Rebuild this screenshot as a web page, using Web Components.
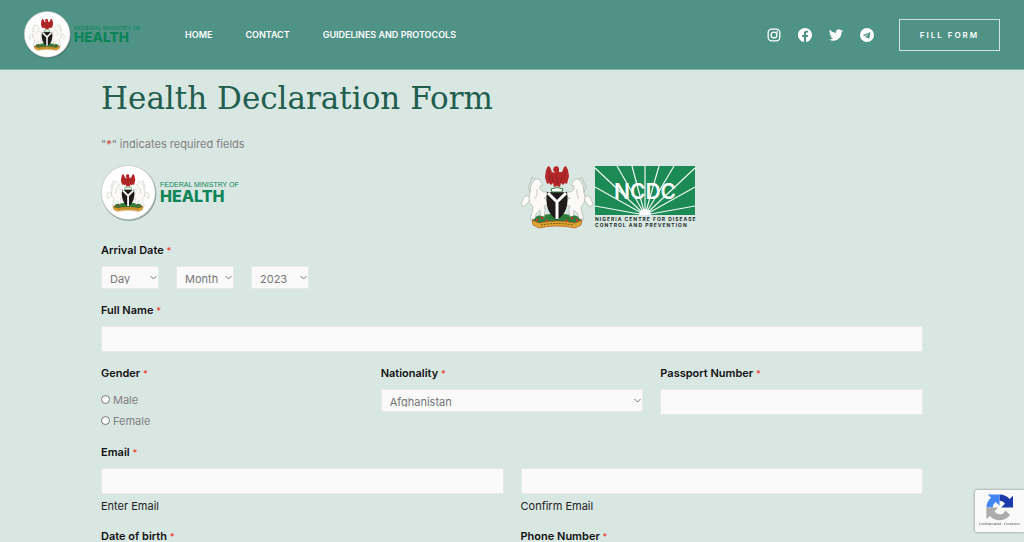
<!DOCTYPE html>
<html lang="en">
<head>
<meta charset="utf-8">
<meta name="viewport" content="width=device-width, initial-scale=1">
<title>Health Declaration Form</title>
<style>
  body {
    margin: 0;
    background: #d9e7e3;
    color: #808080;
    font-family: Inter, "Liberation Sans", sans-serif;
    font-size: 11px;
    line-height: 16px;
  }
</style>
</head>
<body>
<site-header>
  <a href="#home">Home</a>
  <a href="#contact">Contact</a>
  <a href="#guidelines">Guidelines and Protocols</a>
</site-header>

<declaration-form>
  <form-row columns="2">
    <ministry-logo></ministry-logo>
    <ncdc-logo></ncdc-logo>
  </form-row>
  <date-field label="Arrival Date"></date-field>
  <text-field label="Full Name"></text-field>
  <form-row columns="3">
    <radio-field label="Gender" options="Male,Female"></radio-field>
    <select-field label="Nationality" options="Afghanistan,Albania,Algeria,Nigeria"></select-field>
    <text-field label="Passport Number"></text-field>
  </form-row>
  <email-field label="Email"></email-field>
  <form-row columns="2">
    <text-field label="Date of birth"></text-field>
    <text-field label="Phone Number"></text-field>
  </form-row>
</declaration-form>

<recaptcha-badge></recaptcha-badge>

<script>
// One supporter horse, facing right. Mirrored for the other side.
const horse = `
  <path d="M9 33 Q4 28 2 34 L0 39 2 42 6 39 8 36Z"/>
  <path d="M22 20 L18 14 14 14 10 20 9 28 8 33 9 38 12 42 11 48 9 54 14 54 15 49 19 45 20 52 23 54 24 45 23 41 27 40 27 36 23 33 27 31 27 27 22 27 19 24 19 21Z"/>
  <path d="M14 14 L11 12 9 18 7 22 9 27 M16 24 Q17 30 14 34" fill="none"/>`

// Coat of arms, drawn on a 72x64 canvas. Shared by both logos.
const crest = `
  <path d="M11 57 Q13 50 22 50 L36 48 50 50 Q59 50 61 57 L50 60 H22Z" fill="#2f7d3b"/>
  <g fill="#fbfaf7" stroke="#aaaaa4" stroke-width=".6" stroke-linejoin="round">
    <g>${horse}</g>
    <g transform="translate(72 0) scale(-1 1)">${horse}</g>
  </g>
  <path d="M11 57 Q14 51 21 51 L28 53 36 50 44 53 51 51 Q58 51 61 57 L50 60 H22Z" fill="#2f7d3b"/>
  <g fill="#d8322c">
    <circle cx="16" cy="55" r="1.200"/><circle cx="21" cy="53" r="1.200"/><circle cx="26" cy="56" r="1.200"/>
    <circle cx="46" cy="56" r="1.200"/><circle cx="51" cy="53" r="1.200"/><circle cx="56" cy="55" r="1.200"/>
  </g>
  <path d="M11 55 L18 58 Q36 54 54 58 L61 55 60 60 54 63 Q36 59 18 63 L12 60Z" fill="#dba62f" stroke="#b5461f" stroke-width=".6"/>
  <path d="M20 60 Q36 57 52 60" fill="none" stroke="#7a5a1b" stroke-width="1" stroke-dasharray="2 1"/>
  <path d="M26 27 Q31 28 36 26 Q41 28 46 27 Q49 47 36 55 Q23 47 26 27Z" fill="#1f1b1a"/>
  <path d="M27 28 L36 37 45 28 M36 36 V54" fill="none" stroke="#fff" stroke-width="3"/>
  <path d="M30 24 Q36 21 42 24 L41 27 H31Z" fill="#fff" stroke="#2f7d3b" stroke-width="1"/>
  <path d="M34 8 L32 5 33 2 36 1 38 3 38 7 41 7 43 2 45 1 47 5 48 11 46 19 44 18 42 20 40 18 39 22 36 21 33 22 32 18 30 20 28 18 26 19 24 12 25 5 27 1 29 2 31 7Z" fill="#b5282a"/>
  <path d="M28 6 L29 15 M31 10 L32 17 M44 6 L43 15 M41 10 L40 17 M36 9 V19" fill="none" stroke="#7c1b1d" stroke-width=".6"/>`

// Builds the shadow root from a style block and markup
class BaseElement extends HTMLElement {
  constructor () {
    super()
    this.attachShadow({ mode: 'open' })
  }

  render (css, html) {
    this.shadowRoot.innerHTML = `<style>*{box-sizing:border-box}${css}</style>${html}`
  }
}

const labelCss = `
  .label { display: block; color: #111; font-weight: 600; line-height: 16px; padding: 0; margin: 0 0 8px; }
  .label span { color: #f04438; font-size: 9px; font-weight: 600; line-height: 9px; }`

const inputCss = `
  input[type="text"], input[type="email"] {
    display: block; width: 100%; height: 26px; margin: 0; padding: 0 8px;
    background: #fafafa; border: 1px solid #e6e9e8; border-radius: 0;
    color: #666; font: inherit;
  }`

const selectCss = `
  .select { position: relative; display: block; }
  select {
    appearance: none; display: block; width: 100%; height: 23px; margin: 0;
    padding: 4px 12px 4px 8px; background: #fafafa; border: 1px solid #e6e9e8;
    border-radius: 0; color: #757575; font: inherit; line-height: 16px;
  }
  .select svg { position: absolute; top: 8px; right: 2px; width: 7px; height: 7px; pointer-events: none; }`

const chevron = '<svg viewBox="0 0 7 7" aria-hidden="true"><path d="M.5 2 L3.5 5 6.5 2" fill="none" stroke="#777" stroke-width="1"/></svg>'

class MinistryLogo extends BaseElement {
  connectedCallback () {
    this.render(`
      :host { display: block; }
      svg { display: block; width: var(--logo-width, 139px); height: auto; overflow: visible; }
      .small { font: 7px "Liberation Sans", sans-serif; }
      .large { font: 800 16px Inter, sans-serif; }
    `, `
      <svg viewBox="0 0 139 56" role="img" aria-label="Federal Ministry of Health">
        <circle cx="28" cy="28.5" r="27.5" fill="#3b5550" opacity=".45"/>
        <circle cx="27.3" cy="27.5" r="27" fill="#fff" stroke="#b5bcba" stroke-width=".6"/>
        <g transform="translate(5.5 8.5) scale(.6)">${crest}</g>
        <g fill="#0c8457">
          <text class="small" x="59" y="22">FEDERAL MINISTRY OF</text>
          <text class="large" x="59" y="37">HEALTH</text>
        </g>
      </svg>`)
  }
}
customElements.define('ministry-logo', MinistryLogo)

class NcdcLogo extends BaseElement {
  connectedCallback () {
    const ends = [[0, 40], [0, 21], [0, 2], [22, 0], [37, 0], [50, 0], [64, 0], [79, 0], [100, 2], [100, 21], [100, 40]]
    const rays = ends.map(([x, y]) => `M50 49L${x} ${y}`).join('')
    this.render(`
      :host { display: block; }
      svg { display: block; width: 175px; height: 64px; overflow: visible; }
      .name { font: 600 21px Inter, sans-serif; }
      .line { font: 700 5px Inter, sans-serif; letter-spacing: 1px; }
    `, `
      <svg viewBox="0 0 175 64" role="img" aria-label="Nigeria Centre for Disease Control and Prevention">
        ${crest}
        <g transform="translate(74 1)">
          <path d="M0 0H100V49H0Z" fill="#1b8a55"/>
          <path d="${rays}" stroke="#eef8f2" stroke-width="1.2"/>
          <path d="M44 49a6 6 0 0 1 12 0Z" fill="#fff"/>
          <text class="name" x="50" y="33" text-anchor="middle" fill="#fff">NCDC</text>
          <text class="line" x="0" y="55" fill="#1e2b27">NIGERIA CENTRE FOR DISEASE</text>
          <text class="line" x="0" y="61" fill="#1e2b27">CONTROL AND PREVENTION</text>
        </g>
      </svg>`)
  }
}
customElements.define('ncdc-logo', NcdcLogo)

class SiteHeader extends BaseElement {
  connectedCallback () {
    this.render(`
      :host {
        display: flex; align-items: center; height: 70px; box-sizing: border-box;
        padding: 0 24px; background: #4f9286; border-bottom: 1px solid #80b3a9;
        --logo-width: 118px;
      }
      nav { display: flex; gap: 33px; margin-left: 43px; }
      ::slotted(a) { color: #fff; font-size: 9px; font-weight: 600; text-transform: uppercase; text-decoration: none; }
      .social { display: flex; gap: 17px; margin-left: auto; }
      .social a { display: block; width: 14px; height: 14px; }
      .social svg { display: block; width: 14px; height: 14px; fill: #fff; }
      button {
        width: 101px; height: 32px; margin-left: 25px; padding: 0; background: none;
        border: 1px solid #cfe2de; color: #fff; font: 600 8px Inter, sans-serif;
        letter-spacing: 2px; text-transform: uppercase;
      }
    `, `
      <ministry-logo></ministry-logo>
      <nav><slot></slot></nav>
      <div class="social">
        <a href="#instagram" aria-label="Instagram"><svg viewBox="0 0 24 24"><g fill="none" stroke="#fff" stroke-width="2.2"><rect x="2" y="2" width="20" height="20" rx="6"/><circle cx="12" cy="12" r="5"/></g><circle cx="17.5" cy="6.5" r="1.5"/></svg></a>
        <a href="#facebook" aria-label="Facebook"><svg viewBox="0 0 24 24"><path d="M24 12.070C24 5.400 18.600 0 12 0S0 5.400 0 12.070C0 18.100 4.400 23.100 10.100 24v-8.400H7.100v-3.500h3V9.400c0-3 1.800-4.700 4.500-4.700 1.300 0 2.700.2 2.700.2v3h-1.500c-1.500 0-2 .9-2 1.900v2.300h3.400l-.5 3.500h-2.900V24C19.600 23.100 24 18.100 24 12.070z"/></svg></a>
        <a href="#twitter" aria-label="Twitter"><svg viewBox="0 0 24 24"><path d="M24 4.600a10 10 0 0 1-2.800.8 4.900 4.900 0 0 0 2.200-2.700c-1 .6-2 1-3.100 1.200a4.900 4.900 0 0 0-8.400 4.500C7.700 8.100 4.100 6.100 1.700 3.100a4.900 4.900 0 0 0 1.500 6.600c-.8 0-1.600-.2-2.200-.6v.1a4.900 4.900 0 0 0 3.900 4.800c-.7.2-1.500.2-2.200.1a4.900 4.900 0 0 0 4.600 3.400A9.900 9.900 0 0 1 0 19.500 14 14 0 0 0 7.500 21.700c9.100 0 14-7.500 14-14v-.6A10 10 0 0 0 24 4.600z"/></svg></a>
        <a href="#telegram" aria-label="Telegram"><svg viewBox="0 0 24 24"><path fill-rule="evenodd" d="M12 0a12 12 0 1 0 0 24 12 12 0 0 0 0-24zm5.900 8.200-2 9.300c-.1.700-.5.800-1.100.5l-3-2.200-1.500 1.400c-.2.200-.3.300-.6.300l.2-3.100 5.600-5c.2-.2-.1-.3-.4-.1l-6.900 4.300-3-.9c-.6-.2-.6-.6.1-.9l11.600-4.500c.6-.2 1.100.1 1 .9z"/></svg></a>
      </div>
      <button type="button">Fill Form</button>`)
  }
}
customElements.define('site-header', SiteHeader)

class DeclarationForm extends BaseElement {
  connectedCallback () {
    this.render(`
      :host { display: block; padding: 7px 101px 0; }
      h1 { margin: 0; color: #225d4e; font: 400 31px/42px "DejaVu Serif", serif; }
      p { margin: 17px 0 13px; }
      p span { color: #d0392b; }
      form { display: flex; flex-direction: column; gap: 13px; }
    `, `
      <h1>Health Declaration Form</h1>
      <p>"<span>*</span>" indicates required fields</p>
      <form><slot></slot></form>`)
  }
}
customElements.define('declaration-form', DeclarationForm)

class FormRow extends BaseElement {
  connectedCallback () {
    this.render(`
      :host {
        display: grid; gap: 17px; align-items: start;
        grid-template-columns: repeat(${this.getAttribute('columns')}, minmax(0, 1fr));
      }
    `, '<slot></slot>')
  }
}
customElements.define('form-row', FormRow)

class TextField extends BaseElement {
  connectedCallback () {
    this.render(`:host { display: block; } ${labelCss} ${inputCss}`, `
      <label class="label" for="input">${this.getAttribute('label')} <span>*</span></label>
      <input id="input" type="text" required>`)
  }
}
customElements.define('text-field', TextField)

class SelectField extends BaseElement {
  connectedCallback () {
    const options = this.getAttribute('options').split(',')
    this.render(`:host { display: block; } ${labelCss} ${selectCss}`, `
      <label class="label" for="select">${this.getAttribute('label')} <span>*</span></label>
      <div class="select">
        <select id="select">${options.map(o => `<option>${o}</option>`).join('')}</select>${chevron}
      </div>`)
  }
}
customElements.define('select-field', SelectField)

class DateField extends BaseElement {
  connectedCallback () {
    const parts = ['Day', 'Month', '2023']
    const names = ['Day', 'Month', 'Year']
    this.render(`
      :host { display: block; }
      fieldset { margin: 0; padding: 0; border: 0; }
      .parts { display: flex; gap: 17px; }
      .select { width: 58px; }
      ${labelCss} ${selectCss}
    `, `
      <fieldset>
        <legend class="label">${this.getAttribute('label')} <span>*</span></legend>
        <div class="parts">
          ${parts.map((p, i) => `<div class="select"><select aria-label="${names[i]}"><option>${p}</option></select>${chevron}</div>`).join('')}
        </div>
      </fieldset>`)
  }
}
customElements.define('date-field', DateField)

class RadioField extends BaseElement {
  connectedCallback () {
    const options = this.getAttribute('options').split(',')
    this.render(`
      :host { display: block; }
      fieldset { margin: 0; padding: 0; border: 0; }
      .option { display: flex; align-items: center; gap: 3px; height: 21px; }
      input { appearance: none; width: 9px; height: 9px; margin: 0; background: #fff; border: 1px solid #777; border-radius: 50%; }
      ${labelCss}
    `, `
      <fieldset>
        <legend class="label">${this.getAttribute('label')} <span>*</span></legend>
        ${options.map(o => `<label class="option"><input type="radio" name="choice" value="${o}">${o}</label>`).join('')}
      </fieldset>`)
  }
}
customElements.define('radio-field', RadioField)

class EmailField extends BaseElement {
  connectedCallback () {
    this.render(`
      :host { display: block; }
      fieldset { margin: 0; padding: 0; border: 0; }
      .pair { display: grid; grid-template-columns: 1fr 1fr; gap: 17px; }
      .pair label { display: block; margin-top: 3px; color: #222; line-height: 18px; }
      ${labelCss} ${inputCss}
    `, `
      <fieldset>
        <legend class="label">${this.getAttribute('label')} <span>*</span></legend>
        <div class="pair">
          <div><input id="enter" type="email"><label for="enter">Enter Email</label></div>
          <div><input id="confirm" type="email"><label for="confirm">Confirm Email</label></div>
        </div>
      </fieldset>`)
  }
}
customElements.define('email-field', EmailField)

class RecaptchaBadge extends BaseElement {
  connectedCallback () {
    this.render(`
      :host {
        position: fixed; right: 0; bottom: 10px; width: 49px; height: 42px; overflow: hidden;
        background: #fafafa; border-radius: 2px 0 0 2px; box-shadow: 0 0 3px #808080;
        color: #444; font: 3px/6px "DejaVu Sans", sans-serif; text-align: center;
        white-space: nowrap; box-sizing: border-box; padding-top: 4px;
      }
      svg { display: block; width: 27px; height: 27px; margin: 0 auto; }
    `, `
      <svg viewBox="0 0 64 64" aria-hidden="true">
        <path d="M64 32V4l-8 8A31 31 0 0 0 32 1v15c6 0 10 3 13 7l-9 9z" fill="#1c3aa9"/>
        <path d="M32 1H4l8 8A31 31 0 0 0 1 32h15c0-6 3-10 7-13l9 9z" fill="#4285f4"/>
        <path d="M1 32v28l8-8a31 31 0 0 0 48-2L46 39c-6 12-20 12-26 2l9-9z" fill="#ababab"/>
      </svg>
      <div>Confidentialité - Conditions</div>`)
  }
}
customElements.define('recaptcha-badge', RecaptchaBadge)
</script>
</body>
</html>
